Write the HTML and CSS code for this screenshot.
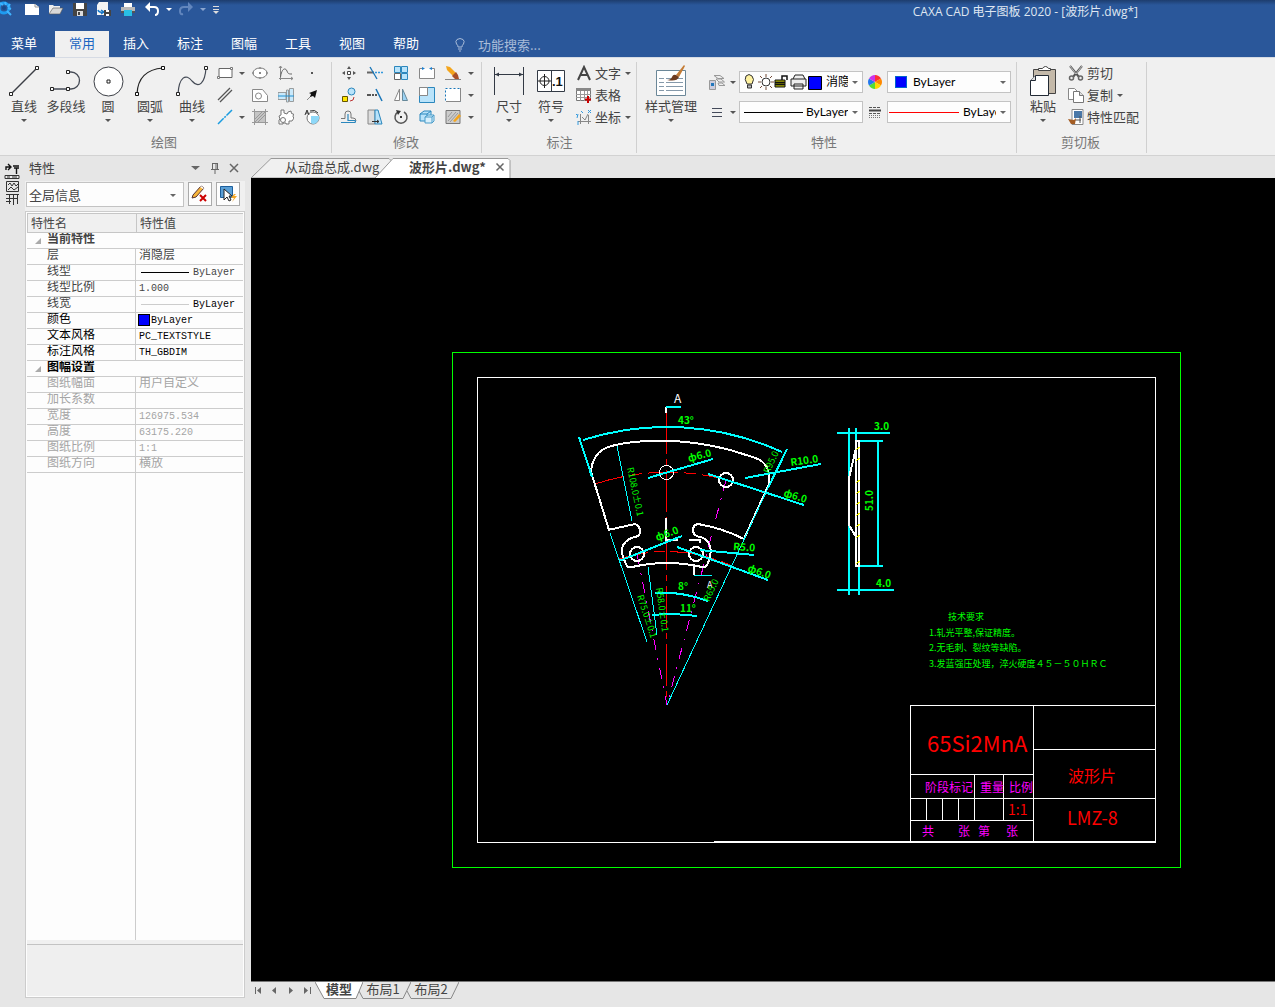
FILE: index.html
```html
<!DOCTYPE html>
<html lang="zh-CN">
<head>
<meta charset="utf-8" />
<title>CAXA CAD 电子图板 2020</title>
<link rel="stylesheet" href="styles.css">
</head>
<body>
	<header class="top">
		<div class="titlebar">
			<div class="quick">
				<svg class="logo" viewBox="0 0 14 18"><circle cx="4" cy="8" r="5" fill="none" stroke="#1e9bf0" stroke-width="3"/><path d="M0 3l3 2M5 2l1 3M10 4l-2 3M11 9l-3-1M7 11l4 4" stroke="#3fb4ff" stroke-width="2"/><circle cx="4" cy="8" r="2" fill="#174a8c"/></svg>
				<button title="新建"><svg viewBox="0 0 16 16"><path d="M1 3h10l4 3v8H1z" fill="#fff"/><path d="M11 3v3h4" fill="none" stroke="#999"/></svg></button>
				<button title="打开"><svg viewBox="0 0 16 16"><path d="M1 13V4h4l1 1h6v2" fill="#eee"/><path d="M1 13l4-6h10l-3 6z" fill="#d8d8d8" stroke="#555" stroke-width=".6"/></svg></button>
				<button title="保存"><svg viewBox="0 0 16 16"><path d="M1 2h14v13H1z" fill="#444"/><path d="M4 2h8v6H4z" fill="#fff"/><path d="M5 10h6v5H5z" fill="#ddd"/><path d="M6 11h2v3H6z" fill="#444"/></svg></button>
				<button title="另存为"><svg viewBox="0 0 16 16"><path d="M3 1h9v13H1V4z" fill="#f4f4f4"/><path d="M2 9q1 3 5 2M5 9l3 2-3 2" fill="none" stroke="#1979ca" stroke-width="1.5"/><path d="M8 9h7v6H8z" fill="#444"/><path d="M10 9h3v2h-3zM10 13h3v2h-3z" fill="#fff"/></svg></button>
				<button title="打印"><svg viewBox="0 0 16 16"><path d="M4 2h8v5H4z" fill="#fff"/><path d="M1 6h14v6H1z" fill="#b9b9b9"/><path d="M1 10h14v2H1z" fill="#555"/><path d="M4 9h8v6H4z" fill="#29bfe5"/></svg></button>
				<button title="撤销"><svg viewBox="0 0 16 16"><path d="M4 6h6q4 0 4 4t-3 4" fill="none" stroke="#fff" stroke-width="2"/><path d="M6 1v10L1 6z" fill="#fff"/></svg></button>
				<i class="arrow light"></i>
				<button title="重做"><svg viewBox="0 0 16 16"><path d="M12 6H6q-4 0-4 4t3 3" fill="none" stroke="#6286bd" stroke-width="2"/><path d="M10 1v10l5-5z" fill="#6286bd"/></svg></button>
				<i class="arrow dim-arrow"></i>
				<button class="more" title="自定义"><svg viewBox="0 0 8 16"><path d="M1 5.500h6M1 8.500h6" stroke="#ddd"/><path d="M1 10h6l-3 3z" fill="#ddd"/></svg></button>
			</div>
			<div class="title">CAXA CAD 电子图板 2020 - [波形片.dwg*]</div>
		</div>
		<nav class="menu">
			<a class="first" href="#">菜单</a>
			<a class="active" href="#">常用</a>
			<a href="#">插入</a>
			<a href="#">标注</a>
			<a href="#">图幅</a>
			<a href="#">工具</a>
			<a href="#">视图</a>
			<a href="#">帮助</a>
			<label class="search"><svg viewBox="0 0 16 16"><path d="M6 11Q6 9 4.500 8Q3 5 5 3.500Q8 1.500 11 3.500Q13 5 11.500 8Q10 9 10 11zM6 13h4M7 15h2" fill="none" stroke="#a9bcd9"/></svg><input type="text" placeholder="功能搜索..." aria-label="功能搜索"></label>
		</nav>
	</header>

	<section class="ribbon">
		<div class="group draw">
			<div class="tools">
				<button class="big"><svg viewBox="0 0 32 32"><path d="M3 29L29 3" stroke="#3c3f46" stroke-width="1.500"/><path d="M1.500 27.500h3v3h-3zM27.500 1.500h3v3h-3z" fill="#fff" stroke="#222"/></svg>直线<i class="arrow"></i></button>
				<button class="big"><svg viewBox="0 0 32 32"><path d="M2 24h16h3a8.500 8.500 0 0 0 0-17h-3" fill="none" stroke="#444a55" stroke-width="1.300"/><path d="M.5 22.500h3v3h-3zM16.500 22.500h3v3h-3zM16.500 5.500h3v3h-3z" fill="#fff" stroke="#222"/></svg>多段线</button>
				<button class="big"><svg viewBox="0 0 32 32"><circle cx="16.500" cy="16.500" r="14.500" fill="#fff" stroke="#3c3f46"/><path d="M15 15h3v3h-3z" fill="#fff" stroke="#222"/></svg>圆<i class="arrow"></i></button>
				<button class="big"><svg viewBox="0 0 32 32"><path d="M3 29Q4 5 29 3" fill="none" stroke="#222" stroke-width="1.200"/><path d="M1.500 27.500h3v3h-3zM27.500 1.500h3v3h-3z" fill="#fff" stroke="#111"/></svg>圆弧<i class="arrow"></i></button>
				<button class="big"><svg viewBox="0 0 32 32"><path d="M2 29C3 12 10 8 16 16C23 24 29 18 30 3" fill="none" stroke="#444a55" stroke-width="1.200"/><path d="M.5 27.500h3v3h-3zM28.500 1.500h3v3h-3z" fill="#fff" stroke="#222"/></svg>曲线<i class="arrow"></i></button>
				<div class="icons">
					<button title="矩形"><svg viewBox="0 0 16 16"><path d="M2 3.500h13v9H2z" fill="#fff" stroke="#666"/><path d="M.5 11.500h2v2h-2zM13.500 2.500h2v2h-2z" fill="#fff" stroke="#777"/></svg></button>
					<i class="arrow"></i>
					<button title="椭圆"><svg viewBox="0 0 16 16"><ellipse cx="8" cy="8" rx="7" ry="5" fill="#fff" stroke="#777"/><path d="M8 2v2M8 12v2M0 8h2M14 8h2M7.500 7.500h1v1h-1z" stroke="#777"/></svg></button>
					<button title="公式曲线"><svg viewBox="0 0 16 16"><path d="M2.500 1v14M1 13.500h14M1 3l1.500-2L4 3M13 12l2 1.500-2 1.500" fill="none" stroke="#888"/><path d="M2.500 12C4 2 8 3 9 6s2 3 5 3" fill="none" stroke="#666"/></svg></button>
					<button title="点"><svg viewBox="0 0 16 16"><path d="M7 7h2v2H7z" fill="#555"/></svg></button>
					<button title="平行线"><svg viewBox="0 0 16 16"><path d="M1 13L13 1M3 15L15 3" stroke="#555" stroke-width="1.300"/></svg></button>
					<i></i>
					<button title="轮廓"><svg viewBox="0 0 16 16"><path d="M.5 2.500h10l5 6v6H.5z" fill="#fff" stroke="#888"/><circle cx="6.500" cy="9" r="3" fill="none" stroke="#888"/></svg></button>
					<button title="螺母"><svg viewBox="0 0 16 16"><path d="M0 5.500h8v7H0zM8.500 3v12h2V3zM11.500 1.500h4v13h-4z" fill="#c9e9fb" stroke="#888" stroke-width=".8"/><path d="M0 9h16" stroke="#2090d0"/></svg></button>
					<button title="箭头"><svg viewBox="0 0 16 16"><path d="M3 13l7-7" stroke="#888"/><path d="M13 3l-2 8-2-2-3 1 1-3-2-1z" fill="#111"/></svg></button>
					<button title="中心线"><svg viewBox="0 0 16 16"><path d="M1 15L15 1" stroke="#1b9ce0" stroke-width="1.500" stroke-dasharray="8 1 2 1"/></svg></button>
					<i class="arrow"></i>
					<button title="剖面线"><svg viewBox="0 0 16 16"><path d="M2.500 2.500h11v11h-11z" fill="#c4c4c4" stroke="#777"/><path d="M0 2.500h16M0 13.500h16M2.500 0v16M13.500 0v16M3 10l7-7M3 13L13 3M6 13l7-7" stroke="#999"/></svg></button>
					<button title="齿轮"><svg viewBox="0 0 16 16"><path d="M3 1h3v3l3 1 1-2 3-1 .5 2.500 2 .5-.5 3 1 1-2 3h-3v3H8v-1H5v1H1v-4l1-1-1-3 2-1z" fill="#fff" stroke="#777"/><circle cx="5" cy="11" r="2.500" fill="#fff" stroke="#777"/></svg></button>
					<button title="局部放大"><svg viewBox="0 0 16 16"><circle cx="9" cy="9" r="6" fill="#fff" stroke="#777"/><path d="M7 7h8v3q-2 5-6 5l-2-1z" fill="#8ed8f8"/><path d="M1 6l2-5 2 5M2 4h2M6 2q5-2 8 2" fill="none" stroke="#333"/></svg></button>
				</div>
			</div>
			<div class="caption">绘图</div>
		</div>

		<div class="group modify">
			<div class="tools">
				<div class="icons">
					<button title="平移"><svg viewBox="0 0 16 16"><path d="M6.500 6.500h3v3h-3z" fill="#fff" stroke="#444"/><path d="M8 1l2 3H6zM8 15l2-3H6zM1 8l3-2v4zM15 8l-3-2v4z" fill="#555"/></svg></button>
					<button title="裁剪"><svg viewBox="0 0 16 16"><path d="M0 7.500h7" stroke="#666" stroke-width="2"/><path d="M8 7.500h8" stroke="#39d" stroke-dasharray="2 1" stroke-width="1.500"/><path d="M3 2l7 12" stroke="#1976b8" stroke-width="1.300"/></svg></button>
					<button title="阵列"><svg viewBox="0 0 16 16"><path d="M1.500 1.500h6v6h-6zM8.500 1.500h6v6h-6zM8.500 8.500h6v6h-6z" fill="#b9e3fa" stroke="#2b87bd"/><path d="M1.500 8.500h6v6h-6z" fill="#fff" stroke="#666"/></svg></button>
					<button title="打断"><svg viewBox="0 0 16 16"><path d="M5 3.500H.5v10h15v-10H12" fill="#fff" stroke="#888"/><path d="M3 2l3 1.500L3 5zM13 2l-3 1.500L13 5z" fill="#1b7fd0"/></svg></button>
					<button title="删除"><svg viewBox="0 0 16 16"><path d="M1 1l4 1 6 6-3 3L2 5z" fill="#f4a51c"/><path d="M7 11l4-4 2 3 1 4-3 1z" fill="#a94f27"/><path d="M0 14.500h16" stroke="#888"/></svg></button>
					<i class="arrow"></i>
					<button title="复制"><svg viewBox="0 0 16 16"><path d="M1.500 9.500h5v5h-5z" fill="#ffe600" stroke="#665500"/><circle cx="10.500" cy="4.500" r="3.500" fill="#b9e3fa" stroke="#2b87bd"/><path d="M9 14q4 0 4-4" fill="none" stroke="#b33"/></svg></button>
					<button title="延伸"><svg viewBox="0 0 16 16"><path d="M0 8h4M5 8h2M8 8h2" stroke="#555" stroke-width="2"/><path d="M9 2l6 12" stroke="#1976b8" stroke-width="1.500"/></svg></button>
					<button title="镜像"><svg viewBox="0 0 16 16"><path d="M6.500 2v11.500h-5z" fill="#fff" stroke="#888"/><path d="M9.500 2v11.500h5z" fill="#9bd2f4" stroke="#689"/></svg></button>
					<button title="缩放"><svg viewBox="0 0 16 16"><path d="M.5.500h15v15H.5z" fill="#b9e3fa" stroke="#2b87bd"/><path d="M.5.500h8v8h-8z" fill="#fff" stroke="#888"/></svg></button>
					<button title="选择"><svg viewBox="0 0 16 16"><path d="M.5 1.500h15v13H.5z" fill="#fff" stroke="#1976b8" stroke-dasharray="2 2"/><path d="M15.500 1v13.500H1" fill="none" stroke="#888"/></svg></button>
					<i class="arrow"></i>
					<button title="等距"><svg viewBox="0 0 16 16"><path d="M0 9.500h4V5q0-3 3-3t3 3v4h2q3 0 3 3" fill="none" stroke="#777"/><path d="M0 13.500h14q1-1 0-2H7V5" fill="none" stroke="#2b87bd" stroke-width="1.200"/></svg></button>
					<button title="拉伸"><svg viewBox="0 0 16 16"><path d="M1 1h7v14H1z" fill="#ddd" stroke="#888"/><path d="M8 1h3l4 14H8z" fill="#b9e3fa" stroke="#2b87bd"/><path d="M5 12.500h7M10 11l2 1.500-2 1.500" fill="none" stroke="#333"/></svg></button>
					<button title="旋转"><svg viewBox="0 0 16 16"><path d="M5 3A6 6 0 1 0 11 3" fill="none" stroke="#555" stroke-width="1.500"/><path d="M3 1l5 1-3 4zM7 7h2v2H7z" fill="#333"/></svg></button>
					<button title="圆角"><svg viewBox="0 0 16 16"><path d="M1 5l4-3h7v7l-4 3H1z" fill="#b9e3fa" stroke="#2b87bd"/><path d="M1 5h7v7M8 5l4-3" fill="none" stroke="#2b87bd"/><path d="M6 8l3-2h6v6l-2 2H6z" fill="#d9f0fc" stroke="#4a9cc9"/><path d="M6 8h7v6M13 8l2-2" fill="none" stroke="#4a9cc9"/></svg></button>
					<button title="编辑"><svg viewBox="0 0 16 16"><path d="M1 1.500h14v13H1z" fill="#ccc" stroke="#777"/><path d="M3 12l8-9M5 13l8-9M3 8l4-5" stroke="#999"/><path d="M8 12l6-7 2 2-6 6z" fill="#f4a51c"/></svg></button>
					<i class="arrow"></i>
				</div>
			</div>
			<div class="caption">修改</div>
		</div>

		<div class="group annotate">
			<div class="tools">
				<button class="big"><svg viewBox="0 0 32 32"><path d="M1.500 2v28M30.500 2v28M2 9.500h28" stroke="#333a45"/><path d="M2 9.500l4-2v4zM30 9.500l-4-2v4z" fill="#333a45"/></svg>尺寸<i class="arrow"></i></button>
				<button class="big"><svg viewBox="0 0 32 32"><path d="M2.500 5.500h27v21h-27zM16.500 5.500v21" fill="#fff" stroke="#333a45"/><circle cx="9.500" cy="16" r="4.500" fill="none" stroke="#222"/><path d="M3 16h13M9.500 9v14" stroke="#222"/><text x="17" y="21" class="bold-num">.1</text></svg>符号<i class="arrow"></i></button>
				<div class="list">
					<button><svg viewBox="0 0 16 16"><path d="M2 15L8 2l6 13M4 10h8" fill="none" stroke="#444" stroke-width="2"/></svg>文字<i class="arrow"></i></button>
					<button><svg viewBox="0 0 16 16"><path d="M.5 1.500h14v12H.5z" fill="#fff" stroke="#777"/><path d="M0 1h15v3H0z" fill="#888"/><path d="M0 7.500h15M0 10.500h15M4.500 4v10M8.500 4v10M11.500 4v10" stroke="#999"/><path d="M12 9v7M9 12.500h6" stroke="#c00" stroke-width="2"/></svg>表格</button>
					<button><svg viewBox="0 0 16 16"><path d="M4.500 5v10M2 12.500h13M6 8l3 3 3-6M12.500 6v9" fill="none" stroke="#888"/><path d="M0 5l2 2M2 5l-1 4M5 2l2 2M12 1l3 3M15 1l-3 3M1 13h2M1 15h2" stroke="#39d"/></svg>坐标<i class="arrow"></i></button>
				</div>
			</div>
			<div class="caption">标注</div>
		</div>

		<div class="group props">
			<div class="tools">
				<button class="big wide"><svg viewBox="0 0 32 32"><path d="M1.500 5.500h29v25h-29z" fill="#fff" stroke="#6b8798"/><path d="M4 13.500h5M4 17.500h5M4 21.500h5M4 25.500h5M11 13.500h17M11 17.500h17M11 21.500h17M11 25.500h17" stroke="#8599aa"/><path d="M21 10l8-10 1 1-6 11z" fill="#c47c35"/><path d="M12 15q4 0 5-3t4-2l3 2q-2 5-12 3z" fill="#6e3b1e"/></svg>样式管理<i class="arrow"></i></button>
				<div class="fields">
					<button title="图层"><svg viewBox="0 0 16 16"><path d="M5 1.500h6l4 3H9zM7 5h5l3.500 3H10zM9 9h4l3 2.500h-6z" fill="#eee" stroke="#999"/><path d="M.5 6.500h6v9h-6z" fill="#ccd" stroke="#999"/><path d="M2 9h3v3H2z" fill="#27b"/></svg></button>
					<i class="arrow"></i>
					<div class="combo">
						<svg class="layer" viewBox="0 0 78 18"><path d="M3 11Q0 6 2 3q3-3 6 0q3 3 0 8z" fill="#fff2a0" stroke="#333"/><path d="M3.500 12h4v3h-4z" fill="#bbb" stroke="#333"/><circle cx="22" cy="9" r="4" fill="#fff" stroke="#333"/><path d="M22 1v3M22 14v3M14 9h3M27 9h3M16 3l2 2M28 3l-2 2M16 15l2-2M28 15l-2-2" stroke="#754a36"/><path d="M31 7h10v7H31z" fill="#a8a800" stroke="#111"/><path d="M38 7V3h5v4M31 9.500h10M31 11.500h10" fill="none" stroke="#111" stroke-width="1.500"/><path d="M49 6l2-4h8l2 4M47 6h15v7H47zM50 11h9v5h-9z" fill="#eee" stroke="#222"/><path d="M64.500 3.500h13v13h-13z" fill="#00f" stroke="#000"/></svg>
						<select aria-label="图层"><option>消隐层</option></select>
					</div>
					<svg viewBox="0 0 16 16"><path d="M8 8V1a7 7 0 0 1 6 3.500z" fill="#f33"/><path d="M8 8l6-3.500a7 7 0 0 1 0 7z" fill="#f80"/><path d="M8 8l6 3.500A7 7 0 0 1 8 15z" fill="#ffd900"/><path d="M8 8v7a7 7 0 0 1-6-3.500z" fill="#5d3"/><path d="M8 8l-6 3.500a7 7 0 0 1 0-7z" fill="#27e"/><path d="M8 8L2 4.500A7 7 0 0 1 8 1z" fill="#c3e"/></svg>
					<div class="combo color">
						<span class="swatch"></span>
						<select aria-label="颜色"><option>ByLayer</option></select>
					</div>
					<button title="线型"><svg viewBox="0 0 16 16"><path d="M3 4.500h10M3 8.500h10M3 12.500h10" stroke="#444a5a" stroke-width="1.200"/></svg></button>
					<i class="arrow"></i>
					<div class="combo">
						<span class="line black"></span>
						<select aria-label="线型"><option>ByLayer</option></select>
					</div>
					<svg viewBox="0 0 16 16"><path d="M2 3.500h12M2 9.500h12" stroke="#555" stroke-dasharray="3 1"/><path d="M2 6.500h12" stroke="#444" stroke-width="2"/><path d="M2 11.500h12M2 13.500h12" stroke="#777" stroke-dasharray="1 1"/></svg>
					<div class="combo weight">
						<span class="line scarlet"></span>
						<select aria-label="线宽"><option>ByLayer</option></select>
					</div>
				</div>
			</div>
			<div class="caption">特性</div>
		</div>

		<div class="group clip">
			<div class="tools">
				<button class="big"><svg viewBox="0 0 32 32"><path d="M6.500 4.500h22v24h-22z" fill="#c4b9a9" stroke="#444"/><path d="M11.500 5.500v-2h4q1-2 3-2t3 2h2v2z" fill="#fff" stroke="#444"/><path d="M8.500 10.500h13v20h-18v-15z" fill="#fff" stroke="#222a35"/><path d="M8.500 10.500v5h-5" fill="#ddd" stroke="#222a35"/></svg>粘贴<i class="arrow"></i></button>
				<div class="list">
					<button><svg viewBox="0 0 16 16"><path d="M2 1l9 11M14 1L5 12" stroke="#555" stroke-width="2"/><path d="M2 1l6 8M14 1L8 9" stroke="#eee" stroke-width=".7"/><circle cx="3.500" cy="13" r="2" fill="#eee" stroke="#666" stroke-width="1.500"/><circle cx="12.500" cy="13" r="2" fill="#eee" stroke="#666" stroke-width="1.500"/></svg>剪切</button>
					<button><svg viewBox="0 0 16 16"><path d="M.5 1.500h6l3 3v8h-9z" fill="#fff" stroke="#888"/><path d="M5.500 4.500h6l4 4v7h-10z" fill="#fff" stroke="#777"/><path d="M11.500 4.500v4h4" fill="#ddd" stroke="#777"/></svg>复制<i class="arrow"></i></button>
					<button><svg viewBox="0 0 16 16"><path d="M4 .500h11v15H4z" fill="#fff" stroke="#888"/><path d="M6 2h8v7H6z" fill="#4a78a8"/><path d="M7 11h6M12 7v7" stroke="#555"/><path d="M0 10l6 1 2-2-1 6H3z" fill="#a45d24"/></svg>特性匹配</button>
				</div>
			</div>
			<div class="caption">剪切板</div>
		</div>
	</section>

	<main class="work">
		<aside class="rail">
			<svg viewBox="0 0 16 44"><path d="M2 7v-3h4M4 1l3 3-3 3M9 3h6M10 5h5M12.500 5v6" fill="none" stroke="#111" stroke-width="1.400"/><path d="M1 12.500h14v3H1z" fill="#eee" stroke="#333"/><path d="M3 14h3M8 14h5" stroke="#333"/><path d="M2.500 18.500h12v10h-12zM4 22l2-2 2 3 2-3 2 3 2-2M4 27l3-3 3 3 4-3" fill="none" stroke="#333"/><path d="M2 31.500h13M2 35.500h12M5.500 31v10M9.500 31v11M13.500 31v10M2 38.500h5" fill="none" stroke="#333"/></svg>
		</aside>

		<section class="panel">
			<div class="panel-head">
				<h2>特性</h2>
				<button title="菜单"><svg viewBox="0 0 16 16"><path d="M3 6h9l-4.500 4z" fill="#666"/></svg></button>
				<button title="固定"><svg viewBox="0 0 16 16"><path d="M5.500 3v6M10.500 3v6M5 3.500h6M4 9.500h8M8 10v4" stroke="#666"/><path d="M9 3v6" stroke="#666"/></svg></button>
				<button title="关闭"><svg viewBox="0 0 16 16"><path d="M4 4l8 8M12 4l-8 8" stroke="#666" stroke-width="1.500"/></svg></button>
			</div>
			<div class="panel-bar">
				<div class="combo scope"><select aria-label="范围"><option>全局信息</option></select></div>
				<button title="清除"><svg viewBox="0 0 18 18"><path d="M1 13l1-3 8-9 3 2-8 9z" fill="#f7b53a" stroke="#533"/><path d="M10 1l3 2-1 1-3-2z" fill="#fff"/><path d="M9 10l6 6M15 10l-6 6" stroke="#c00" stroke-width="2"/></svg></button>
				<button title="拾取"><svg viewBox="0 0 18 18"><path d="M1.500 1.500h12v11h-12z" fill="#5a9fd6" stroke="#1d5f9c"/><path d="M5 4v11l3-3 2 4 2-1-2-4h3z" fill="#fff" stroke="#222"/><path d="M15 9l-3 4h3l-2 4 5-6h-3l2-2z" fill="#f5a623"/></svg></button>
			</div>
			<div class="props-box">
				<table>
					<thead>
						<tr><th>特性名</th><th>特性值</th></tr>
					</thead>
					<tbody>
						<tr class="section"><td colspan="2">当前特性</td></tr>
						<tr><td>层</td><td class="cn">消隐层</td></tr>
						<tr><td>线型</td><td class="lined"><span class="line black"></span>ByLayer</td></tr>
						<tr><td>线型比例</td><td>1.000</td></tr>
						<tr><td>线宽</td><td class="lined strong"><span class="line grey"></span>ByLayer</td></tr>
						<tr class="strong"><td>颜色</td><td class="colored"><span class="swatch"></span>ByLayer</td></tr>
						<tr class="strong"><td>文本风格</td><td>PC_TEXTSTYLE</td></tr>
						<tr class="strong"><td>标注风格</td><td>TH_GBDIM</td></tr>
						<tr class="section strong"><td colspan="2">图幅设置</td></tr>
						<tr class="off"><td>图纸幅面</td><td class="cn">用户自定义</td></tr>
						<tr class="off"><td>加长系数</td><td></td></tr>
						<tr class="off"><td>宽度</td><td>126975.534</td></tr>
						<tr class="off"><td>高度</td><td>63175.220</td></tr>
						<tr class="off"><td>图纸比例</td><td>1:1</td></tr>
						<tr class="off"><td>图纸方向</td><td class="cn">横放</td></tr>
					</tbody>
				</table>
				<div class="rest"></div>
				<div class="hint"></div>
			</div>
		</section>

		<section class="doc">
			<div class="doc-tabs">
				<a class="doc-tab" href="#"><svg viewBox="0 0 140 20" preserveAspectRatio="none"><path d="M0 20L20 .500h118l2 2V20z" fill="#f0f0f0" stroke="#999"/></svg><span>从动盘总成.dwg</span></a>
				<a class="doc-tab current" href="#"><svg viewBox="0 0 136 20" preserveAspectRatio="none"><path d="M0 20L18 .500h115l2 2V20" fill="#fff" stroke="#999"/></svg><span>波形片.dwg*</span><svg class="close" viewBox="0 0 10 10"><path d="M1.500 1.500l7 7M8.500 1.500l-7 7" stroke="#666" stroke-width="1.500"/></svg></a>
			</div>
			<div class="canvas">
				<svg class="drawing" viewBox="251 178 1024 803">
					<!-- sheet frame -->
					<path class="g" d="M452.500 352.500h728v515h-728z"/>
					<path class="w" d="M477.500 377.500h678v465h-678z"/>
					<path class="w thick" d="M714 842h442"/>

					<!-- title block -->
					<path class="w" d="M910.500 842V705.500h245M1033.500 705v137M1033 749.500h122M910 774.500h123M910 798.500h245M910 820.500h123M974.500 774v46M1003.500 774v46M926.500 798v22M942.500 798v22M958.500 798v22"/>
					<text class="red t22" x="927" y="752">65Si2MnA</text>
					<text class="red t16" x="1068" y="782">波形片</text>
					<text class="red t18" x="1067" y="825">LMZ-8</text>
					<text class="mag t12" x="925" y="792">阶段标记</text>
					<text class="mag t12" x="980" y="792">重量</text>
					<text class="mag t12" x="1009" y="792">比例</text>
					<text class="red t14" x="1008" y="815">1:1</text>
					<text class="mag t12" x="922" y="836">共</text>
					<text class="mag t12" x="958" y="836">张</text>
					<text class="mag t12" x="978" y="836">第</text>
					<text class="mag t12" x="1006" y="836">张</text>

					<!-- technical notes -->
					<text class="grn t9" x="948" y="620">技术要求</text>
					<text class="grn t9" x="929" y="636">1.轧光平整,保证精度。</text>
					<text class="grn t9" x="929" y="651">2.无毛刺、裂纹等缺陷。</text>
					<text class="grn t9" x="929" y="667">3.发蓝强压处理，淬火硬度４５－５０ＨＲＣ</text>

					<!-- centre lines -->
					<path class="r" d="M666.500 412V705" stroke-dasharray="42 5 6 5"/>
					<path class="r" d="M595 484A232 232 0 0 1 766 494" stroke-dasharray="30 6 12 6"/>
					<path class="r" d="M619 559A154 154 0 0 1 732 566" stroke-dasharray="30 5 12 5"/>
					<path class="m" d="M726 480L667 705M637 554L667 705" stroke-dasharray="11 8 2 8"/>

					<!-- wave plate -->
					<path class="w thick" d="M609 530L592 475Q590 470 593 462Q597 451 608 447Q620 443 645 441Q690 439 730 450Q750 456 758 459Q768 464 769 475V484L744 539"/>
					<path class="w thick" d="M608 530L635 524Q640 525 640 532Q640 536 635 537Q628 538 623 545Q621 550 623 557L626 564Q627 568 632 567Q667 559 702 567Q706 568 708 563Q712 553 710 546Q707 538 700 537Q693 536 693 530Q693 525 698 524Q722 528 744 539"/>
					<circle class="w" cx="666.500" cy="472.500" r="7"/>
					<circle class="w thick" cx="726" cy="480" r="7"/>
					<circle class="w thick" cx="637" cy="554" r="7"/>
					<circle class="w thick" cx="696" cy="554" r="7"/>
					<path class="w thick" d="M666 518v22h12M689 540h11v3M666 407v6M694 566v9"/>

					<!-- dimensions -->
					<path class="c thick" d="M666 407h15M583 440A277 277 0 0 1 782 452M579 437L592 477M787 449L768 488M648 478L713 459M708 474L804 505M745 478L821 464M619 561L682 536M677 547L768 580M700 550L754 555M655 593Q680 591 708 601M652 615Q675 613 697 616"/>
					<path class="c" d="M610 533L647 642M768 488L667 705M617 446L632 521M648 567L657 635M694 575.500h18"/>
					<path class="c thick" d="M837 433h53M849 428v167M856 428v13M859 441h24M878 442v124M859 566h24M859 566v29M837 590h57"/>

					<text class="white t12" x="674" y="403">A</text>
					<text class="white t9" x="707" y="588">A</text>
					<text class="grn dim" x="678" y="424">43°</text>
					<text class="grn dim" transform="translate(689 462) rotate(-15)">ф6.0</text>
					<text class="grn dim" transform="translate(791 466) rotate(-8)">R10.0</text>
					<text class="grn dim" transform="translate(783 496) rotate(17)">ф6.0</text>
					<text class="grn dim" transform="translate(657 541) rotate(-20)">ф6.0</text>
					<text class="grn dim" transform="translate(733 550) rotate(4)">R5.0</text>
					<text class="grn dim" transform="translate(747 571) rotate(20)">ф6.0</text>
					<text class="grn dim" x="678" y="590">8°</text>
					<text class="grn dim" x="680" y="612">11°</text>
					<text class="grn rad" transform="translate(769 474) rotate(-65)">R95.0</text>
					<text class="grn rad" transform="translate(709 602) rotate(-65)">R65.0</text>
					<text class="grn rad" transform="translate(627 468) rotate(78)">R108.0±0.1</text>
					<text class="grn rad" transform="translate(637 596) rotate(72)">R75.0±0.1</text>
					<text class="grn rad" transform="translate(656 588) rotate(82)">R58.0±0.1</text>

					<!-- side view -->
					<path class="w thick" d="M856 441h3v125h-3zM856 448L849 478V525L856 537"/>
					<path class="y" d="M856 450l4-3M856 461l4-3M856 483l4-3M856 494l4-3M856 505l4-3M856 516l4-3M856 527l4-3M856 538l4-3M856 564l4-3"/>
					<text class="grn dim" x="874" y="430">3.0</text>
					<text class="grn dim" x="876" y="587">4.0</text>
					<text class="grn dim" transform="translate(873 511) rotate(-90)">51.0</text>
				</svg>
			</div>
			<div class="sheets">
				<button title="首页"><svg viewBox="0 0 10 10"><path d="M1.500 1v7" stroke="#666"/><path d="M7 1v7L3 4.500z" fill="#666"/></svg></button>
				<button title="上一页"><svg viewBox="0 0 10 10"><path d="M6 1v7L2 4.500z" fill="#666"/></svg></button>
				<button title="下一页"><svg viewBox="0 0 10 10"><path d="M3 1v7l4-3.500z" fill="#666"/></svg></button>
				<button title="末页"><svg viewBox="0 0 10 10"><path d="M8.500 1v7" stroke="#666"/><path d="M2 1v7l4-3.500z" fill="#666"/></svg></button>
				<a class="sheet current" href="#"><svg viewBox="0 0 48 17" preserveAspectRatio="none"><path d="M0 0l9 16.500h32L48 0" fill="#fff" stroke="#888"/></svg><span>模型</span></a>
				<a class="sheet" href="#"><svg viewBox="0 0 52 17" preserveAspectRatio="none"><path d="M0 9l4 7.500h40L52 0" fill="none" stroke="#888"/></svg><span>布局1</span></a>
				<a class="sheet" href="#"><svg viewBox="0 0 52 17" preserveAspectRatio="none"><path d="M0 9l4 7.500h40L52 0" fill="none" stroke="#888"/></svg><span>布局2</span></a>
			</div>
		</section>
	</main>
</body>
</html>
```

FILE: styles.css
```css
* {
	box-sizing: border-box;
}

body {
	margin: 0;
	height: 100vh;
	display: flex;
	flex-direction: column;
	overflow: hidden;
	background: #e6e6e6;
	color: #444;
	font: 13px/18px "Noto Sans CJK SC", sans-serif;
}

a {
	color: inherit;
	text-decoration: none;
}

button {
	display: flex;
	align-items: center;
	justify-content: center;
	margin: 0;
	padding: 0;
	border: 0;
	background: none;
	color: inherit;
	font: inherit;
	white-space: nowrap;
}

svg {
	display: block;
	flex: none;
	width: 16px;
	height: 16px;
}

select,
input {
	min-width: 0;
	margin: 0;
	padding: 0;
	border: 0;
	outline: 0;
	background: none;
	color: inherit;
	font: inherit;
	appearance: none;
}

.arrow {
	justify-self: center;
	width: 0;
	height: 0;
	border: 3px solid transparent;
	border-top-color: #555;
	border-bottom: 0;
}

.arrow.light {
	border-top-color: #fff;
}

.arrow.dim-arrow {
	border-top-color: #8ba6cf;
}

/* title bar and menu */
.top {
	flex: none;
	background: linear-gradient(#1d3d6e, #2a579a 5px);
	color: #fff;
}

.titlebar {
	display: flex;
	justify-content: space-between;
	height: 31px;
	padding-right: 137px;
}

.quick {
	display: flex;
	align-items: center;
	gap: 8px;
	height: 18px;
}

.quick .logo {
	width: 14px;
	height: 18px;
	margin-right: 2px;
}

.quick .arrow {
	margin: 0 -2px;
}

.quick .more svg {
	width: 8px;
}

.title {
	color: #dfe6f1;
	font-family: "Open Sans", "Noto Sans CJK SC", sans-serif;
	font-size: 12px;
	line-height: 24px;
}

.menu {
	display: flex;
	height: 26px;
	line-height: 23px;
}

.menu a {
	width: 54px;
	text-align: center;
}

.menu .first {
	width: 55px;
	padding-right: 7px;
}

.menu .active {
	background: #f0f0f0;
	color: #1a66c2;
}

.search {
	display: flex;
	align-items: center;
	gap: 10px;
	padding-left: 19px;
}

.search input {
	width: 200px;
	height: 24px;
}

.search input::placeholder {
	color: #a9bcd9;
}

/* ribbon */
.ribbon {
	display: flex;
	flex: none;
	height: 99px;
	padding: 4px 0 2px;
	border-top: 1px solid #d6dbe4;
	border-bottom: 1px solid #d2d2d2;
	background: #f0f0f0;
}

.group {
	display: flex;
	flex-direction: column;
	border-right: 1px solid #d0d0d0;
}

.tools {
	display: flex;
	height: 70px;
}

.caption {
	text-align: center;
	color: #777;
	line-height: 20px;
}

.draw {
	padding: 0 6px 0 3px;
}

.modify {
	padding: 0 5px 0 4px;
}

.annotate {
	padding: 0 5px 0 6px;
}

.props {
	padding-right: 5px;
}

.clip {
	padding: 0 7px 0 5px;
}

.big {
	flex-direction: column;
	justify-content: flex-start;
	width: 42px;
	padding-top: 3px;
}

.big svg {
	width: 32px;
	height: 32px;
}

.big .arrow {
	margin-top: 4px;
}

.wide {
	width: 68px;
}

.icons {
	display: grid;
	grid-template-rows: repeat(3, 22px);
	align-items: center;
}

.draw .icons {
	grid-template-columns: 24px 10px repeat(3, 26px);
}

.modify .icons {
	grid-template-columns: repeat(5, 26px) 10px;
}

.list {
	display: flex;
	flex-direction: column;
	padding-left: 4px;
}

.list button {
	justify-content: flex-start;
	gap: 3px;
	height: 22px;
}

.list .arrow {
	margin-left: 1px;
}

.bold-num {
	font: bold 13px "Liberation Sans", sans-serif;
	fill: #111;
}

.fields {
	display: grid;
	grid-template-columns: 20px 12px 124px 24px 124px;
	grid-template-rows: repeat(2, 30px);
	align-items: center;
	justify-items: center;
	padding: 5px 0 0 2px;
}

.combo {
	display: flex;
	align-items: center;
	position: relative;
	width: 124px;
	height: 22px;
	padding: 0 14px 0 4px;
	border: 1px solid #c3c3c3;
	background: #fdfdfd;
	color: #000;
	font-family: Lato, "Noto Sans CJK SC", sans-serif;
	font-size: 12px;
}

.combo:after {
	content: "";
	position: absolute;
	right: 4px;
	top: 50%;
	margin-top: -1px;
	border: 3px solid transparent;
	border-top-color: #666;
	border-bottom: 0;
}

.combo select {
	flex: 1;
	overflow: hidden;
	text-overflow: clip;
}

.combo .layer {
	width: 78px;
	height: 18px;
	margin-right: 4px;
}

.swatch {
	flex: none;
	width: 12px;
	height: 12px;
	border: 1px solid #06c;
	background: #00f;
}

.color .swatch {
	margin: 0 6px 0 3px;
}

.line {
	flex: none;
	width: 59px;
	margin-right: 4px;
	border-top: 1px solid #000;
}

.combo .line {
	margin-right: 3px;
}

.weight {
	padding-left: 1px;
}

.combo .scarlet {
	width: 70px;
	margin-right: 4px;
	border-color: #f00;
}

/* work area */
.work {
	display: flex;
	flex: 1;
	min-height: 0;
}

.rail {
	width: 25px;
	padding: 7px 0 0 4px;
}

.rail svg {
	width: 16px;
	height: 44px;
}

.panel {
	display: flex;
	flex-direction: column;
	width: 220px;
	margin-bottom: 9px;
}

.panel-head {
	display: flex;
	align-items: center;
	gap: 3px;
	height: 25px;
	padding: 0 3px 2px 4px;
}

.panel-head h2 {
	flex: 1;
	margin: 0;
	font-size: 13px;
	font-weight: normal;
}

.panel-bar {
	display: flex;
	gap: 4px;
	height: 30px;
	padding: 1px 5px 4px 1px;
	background: #f0f0f0;
}

.panel-bar button {
	width: 24px;
	height: 24px;
	border: 1px solid #aaa;
	background: #fdfdfd;
}

.panel-bar button svg {
	width: 18px;
	height: 18px;
}

.scope {
	flex: 1;
	width: auto;
	height: 25px;
	padding-left: 2px;
	color: #444;
	font-size: 13px;
}

.scope:after {
	right: 7px;
}

.props-box {
	display: flex;
	flex: 1;
	flex-direction: column;
	padding: 1px;
	border: 1px solid #ccc;
	background: #fdfdfd;
}

table {
	width: 100%;
	table-layout: fixed;
	border-collapse: separate;
	border-spacing: 0;
	font-size: 12px;
	line-height: 15px;
}

th {
	height: 20px;
	padding: 0 3px 2px;
	border: 1px solid #c6c6c6;
	border-width: 1px 0 1px 1px;
	background: #f0f0f0;
	font-weight: normal;
	text-align: left;
}

td {
	height: 16px;
	padding: 0 0 0 3px;
	border-bottom: 1px solid #ccc;
	overflow: hidden;
	font-family: "Liberation Mono", "Noto Sans CJK SC", monospace;
	white-space: nowrap;
}

th:first-child,
td:first-child {
	width: 109px;
}

td:first-child {
	padding-left: 20px;
	border-right: 1px solid #ccc;
}

td + td {
	font-size: 10px;
}

td.cn {
	font-size: 12px;
}

.section td:first-child {
	position: relative;
	border-right: 0;
	font-weight: bold;
}

.section td:before {
	content: "";
	position: absolute;
	left: 8px;
	top: 5px;
	border: 3px solid #aaa;
	border-top-color: transparent;
	border-left-color: transparent;
}

.strong {
	color: #000;
}

.off {
	color: #a5a5a5;
}

.lined .line {
	display: inline-block;
	width: 48px;
	margin: 0 4px 0 2px;
	vertical-align: middle;
}

.lined .grey {
	border-color: #ccc;
}

.colored .swatch {
	display: inline-block;
	margin: 1px 1px 0 -1px;
	border-color: #000;
	vertical-align: top;
}

.rest {
	flex: 1;
	width: 109px;
	border-right: 1px solid #ccc;
}

.hint {
	height: 56px;
	border-top: 4px solid #f0f0f0;
	background: linear-gradient(#c3c3c3 1px, #efefef 1px);
}

/* document area */
.doc {
	display: flex;
	flex: 1;
	flex-direction: column;
	min-width: 0;
	margin-left: 6px;
}

.doc-tabs {
	display: flex;
	height: 22px;
	padding-top: 2px;
}

.doc-tab {
	display: flex;
	align-items: center;
	position: relative;
	width: 140px;
	height: 20px;
	padding: 0 0 2px 34px;
}

.doc-tab > svg:first-child,
.sheet svg {
	position: absolute;
	left: 0;
	top: 0;
	width: 100%;
	height: 100%;
}

.doc-tab span,
.doc-tab .close,
.sheet span {
	position: relative;
}

.doc-tab.current {
	width: 136px;
	margin-left: -16px;
	font-weight: bold;
}

.doc-tab .close {
	width: 10px;
	height: 10px;
	margin: 0 6px 0 auto;
}

.canvas {
	flex: 1;
	min-height: 0;
	background: #000;
}

.drawing {
	width: 100%;
	height: 100%;
	fill: none;
	shape-rendering: crispEdges;
}

.drawing .thick {
	stroke-width: 2;
}

.g {
	stroke: #0f0;
}

.w {
	stroke: #fff;
}

.r {
	stroke: #f00;
}

.m {
	stroke: #f0f;
}

.c {
	stroke: #0ff;
}

.y {
	stroke: #ff0;
}

.red {
	fill: #f00;
}

.mag {
	fill: #f0f;
}

.grn {
	fill: #0f0;
}

.white {
	fill: #fff;
}

.drawing text {
	font-family: "Noto Sans CJK SC", sans-serif;
}

.t22 {
	font-size: 22px;
}

.t18 {
	font-size: 18px;
}

.t16 {
	font-size: 16px;
}

.t14 {
	font-size: 14px;
}

.t12 {
	font-size: 12px;
}

.t9,
.rad {
	font-size: 9px;
}

.dim {
	font-size: 10px;
	font-weight: bold;
}

.sheets {
	display: flex;
	height: 26px;
	border-top: 1px solid #777;
	line-height: 13px;
}

.sheets button {
	width: 16px;
	height: 18px;
}

.sheets button svg {
	width: 10px;
	height: 10px;
}

.sheet {
	position: relative;
	width: 52px;
	height: 17px;
	margin-left: -4px;
	padding-right: 4px;
	text-align: center;
}

.sheet.current {
	width: 48px;
	margin-left: 0;
	padding: 0;
	font-weight: bold;
}
```
